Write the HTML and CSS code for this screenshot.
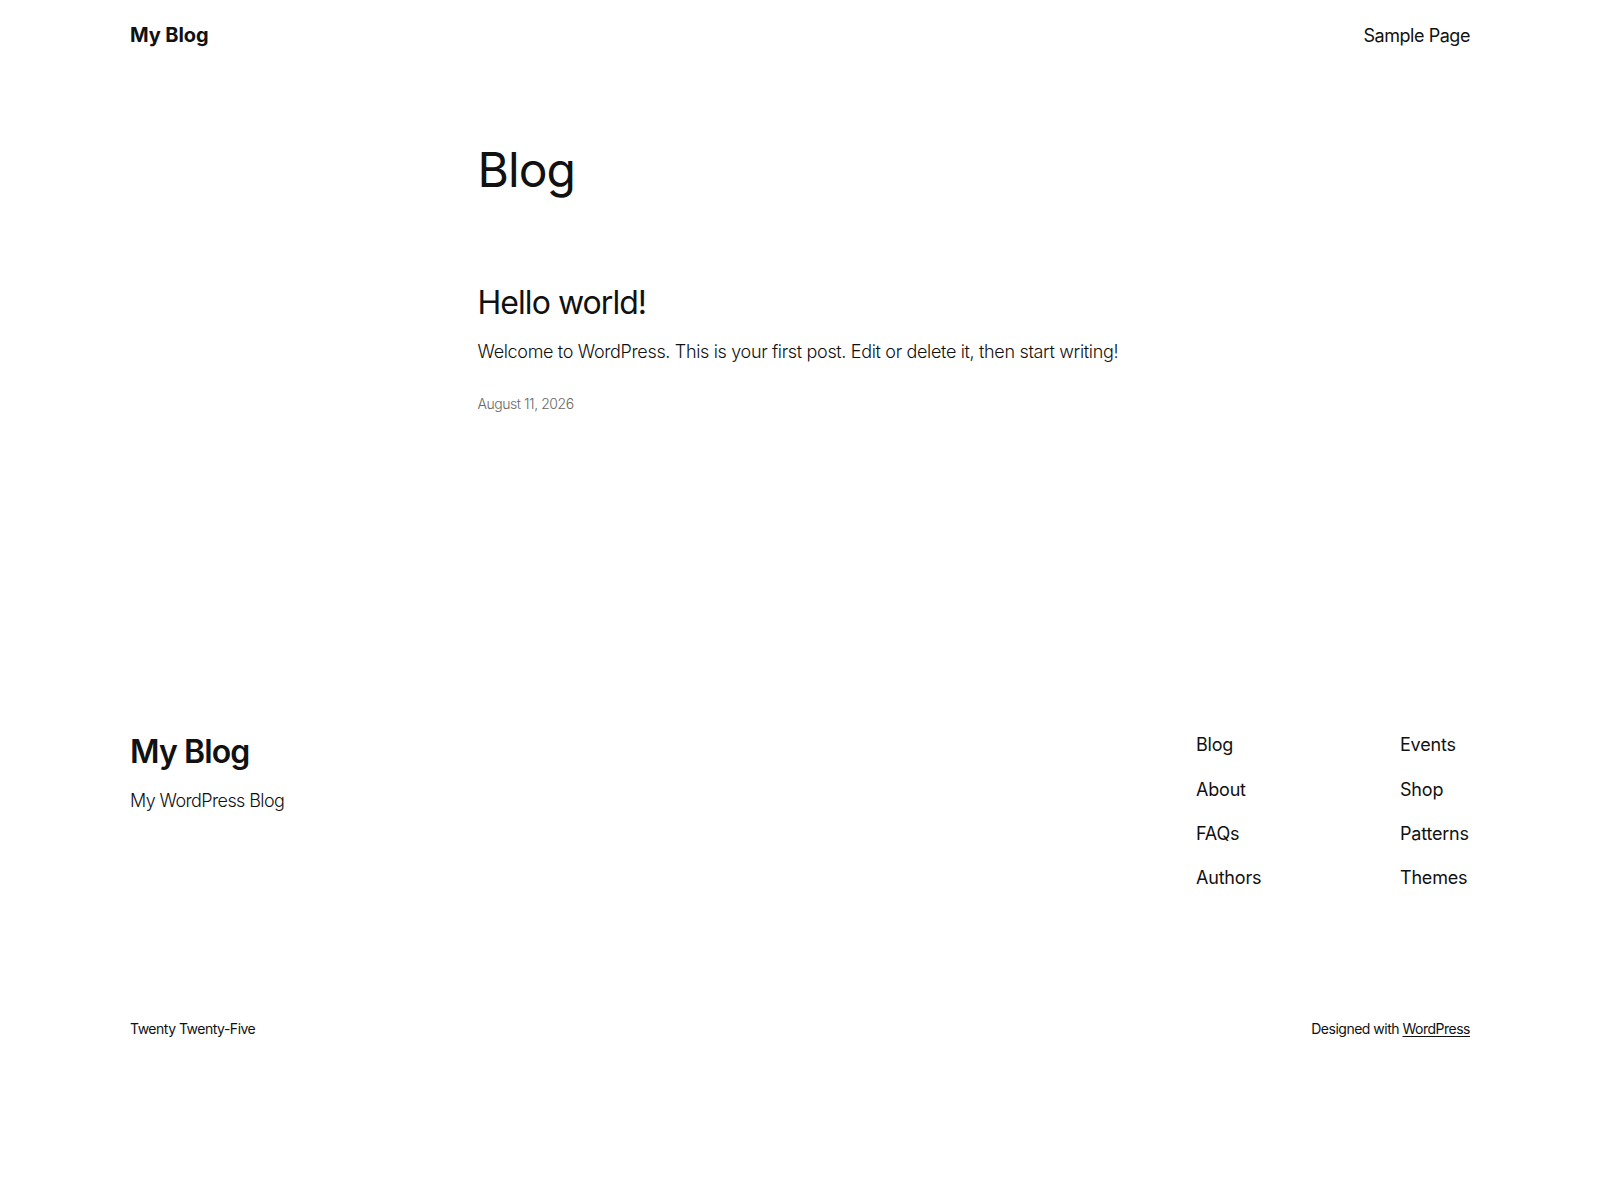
FILE: index.html
```html
<!DOCTYPE html>
<html lang="en">
<head>
  <meta charset="UTF-8">
  <meta name="viewport" content="width=device-width, initial-scale=1">
  <title>Blog – My Blog</title>
  <link rel="stylesheet" href="styles.css">
</head>
<body>
  <header class="site-header">
    <a class="site-title" href="#">My Blog</a>
    <nav class="header-nav">
      <a href="#">Sample Page</a>
    </nav>
  </header>

  <main class="site-main">
    <h1 class="page-title">Blog</h1>

    <article class="post">
      <h2 class="post-title"><a href="#">Hello world!</a></h2>
      <p class="post-excerpt">Welcome to WordPress. This is your first post. Edit or delete it, then start writing!</p>
      <time class="post-date" datetime="2026-08-11">August 11, 2026</time>
    </article>
  </main>

  <footer class="site-footer">
    <div class="footer-top">
      <div class="footer-brand">
        <a class="footer-title" href="#">My Blog</a>
        <p class="tagline">My WordPress Blog</p>
      </div>

      <nav class="footer-nav">
        <ul>
          <li><a href="#">Blog</a></li>
          <li><a href="#">About</a></li>
          <li><a href="#">FAQs</a></li>
          <li><a href="#">Authors</a></li>
        </ul>
        <ul>
          <li><a href="#">Events</a></li>
          <li><a href="#">Shop</a></li>
          <li><a href="#">Patterns</a></li>
          <li><a href="#">Themes</a></li>
        </ul>
      </nav>
    </div>

    <div class="footer-bottom">
      <p>Twenty Twenty-Five</p>
      <p>Designed with <a href="#">WordPress</a></p>
    </div>
  </footer>
</body>
</html>
```

FILE: styles.css
```css
body {
  margin: 0;
  font-family: Inter, "Liberation Sans", sans-serif;
  font-weight: 300;
  font-size: 18px;
  color: #111111;
  background: #ffffff;
}

a {
  color: inherit;
  text-decoration: none;
}

p {
  margin: 0;
}

/* header */
.site-header {
  max-width: 1340px;
  margin: 0 auto;
  padding: 20px 0;
  display: flex;
  justify-content: space-between;
  align-items: baseline;
  line-height: 30px;
}

.site-title {
  font-size: 20px;
  font-weight: 700;
  letter-spacing: -0.1px;
}

.header-nav a {
  font-size: 18px;
  font-weight: 400;
  letter-spacing: -0.45px;
}

/* main */
.site-main {
  width: 645px;
  margin: 0 auto;
  padding-top: 70px;
}

.page-title {
  margin: 0;
  font-size: 48px;
  font-weight: 400;
  line-height: 1.2;
  letter-spacing: -0.9px;
}

.post {
  margin-top: 85px;
  display: flex;
  flex-direction: column;
}

.post-title {
  margin: 0;
  font-size: 32px;
  font-weight: 400;
  line-height: 1.2;
  letter-spacing: -0.95px;
}

.post-excerpt {
  margin-top: 16px;
  line-height: 1.6;
  letter-spacing: -0.34px;
}

.post-date {
  margin-top: 27px;
  font-size: 14px;
  line-height: 1.4;
  color: #686868;
  letter-spacing: -0.45px;
}

/* footer */
.site-footer {
  max-width: 1340px;
  margin: 0 auto;
  padding-top: 318px;
}

.footer-top {
  display: flex;
  justify-content: space-between;
  align-items: flex-start;
}

.footer-title {
  display: block;
  margin-top: 2px;
  font-size: 32px;
  font-weight: 600;
  line-height: 1.2;
  letter-spacing: -0.9px;
}

.tagline {
  margin-top: 15px;
  line-height: 1.6;
  letter-spacing: -0.6px;
}

.footer-nav {
  display: grid;
  grid-template-columns: 204px 70px;
}

.footer-nav ul {
  list-style: none;
  margin: 0;
  padding: 0;
  display: flex;
  flex-direction: column;
  gap: 15.5px;
}

.footer-nav li {
  line-height: 1.6;
  font-weight: 400;
  letter-spacing: -0.2px;
  white-space: nowrap;
}

.footer-bottom {
  margin-top: 126px;
  display: flex;
  justify-content: space-between;
  font-size: 14px;
  line-height: 1.4;
  font-weight: 400;
  letter-spacing: -0.5px;
}

.footer-bottom a {
  text-decoration: underline;
  text-underline-offset: 2px;
}
```
